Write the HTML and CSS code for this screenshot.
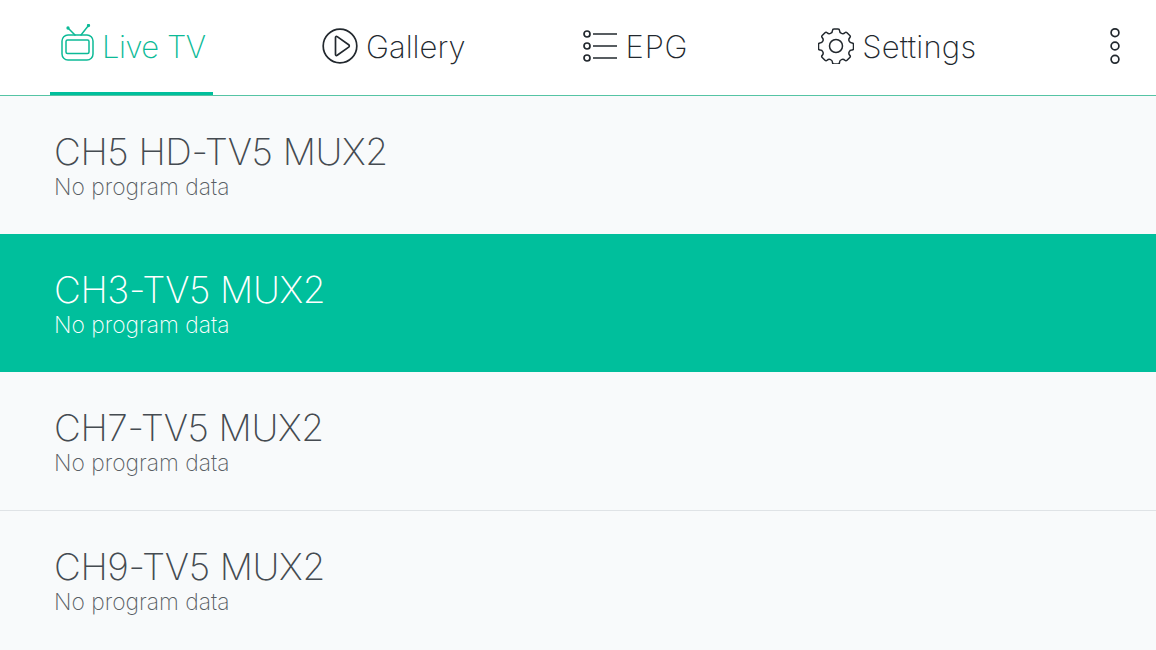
FILE: index.html
```html
<!DOCTYPE html>
<html lang="en">
<head>
<meta charset="utf-8">
<title>Live TV</title>
<link rel="stylesheet" href="styles.css">
</head>
<body>
<header class="topbar">
  <nav class="tabs">
    <a class="tab tab-live active">
      <svg class="icon" width="36" height="38" viewBox="0 0 36 38" fill="none" stroke="currentColor" stroke-width="1.500" stroke-linecap="round" stroke-linejoin="round">
        <rect x="2" y="11" width="31" height="25" rx="6"/>
        <rect x="6" y="16" width="23" height="13.500" rx="1.500"/>
        <path d="M8 4 15 11M28.500 1.500 21 11"/>
        <circle cx="8" cy="4" r=".9" fill="currentColor"/>
        <circle cx="28.500" cy="1.500" r=".9" fill="currentColor"/>
      </svg>
      <span class="label">Live TV</span>
    </a>
    <a class="tab tab-gallery">
      <svg class="icon" width="36" height="36" viewBox="0 0 36 36" fill="none" stroke="currentColor" stroke-width="1.700" stroke-linejoin="round">
        <circle cx="18" cy="18" r="16.800"/>
        <path d="M13.500 9.500c0-1 .9-1.400 1.700-.9l11.500 8.200c.8.600.8 1.700 0 2.300l-11.500 8.200c-.8.500-1.700.1-1.700-.9z"/>
      </svg>
      <span class="label">Gallery</span>
    </a>
    <a class="tab tab-epg">
      <svg class="icon" width="36" height="36" viewBox="0 0 36 36" fill="none" stroke="currentColor" stroke-width="1.700">
        <circle cx="5" cy="6" r="3"/>
        <circle cx="5" cy="18" r="3"/>
        <circle cx="5" cy="30" r="3"/>
        <path d="M11 6h24M11 18h24M11 30h24"/>
      </svg>
      <span class="label">EPG</span>
    </a>
    <a class="tab tab-settings">
      <svg class="icon" width="36" height="36" viewBox="0 0 36 36" fill="none" stroke="currentColor" stroke-width="1.500" stroke-linejoin="round">
        <circle cx="18" cy="18" r="6.500"/>
        <path d="M14.500 2.500c0-1 .7-1.500 1.500-1.500h4c.8 0 1.500.5 1.500 1.500 0 2.800 3.400 4.200 5.400 2.200.7-.7 1.500-.6 2.100 0l2.800 2.800c.6.600.7 1.400 0 2.100-2 2-.6 5.400 2.200 5.400 1 0 1.500.7 1.500 1.500v4c0 .8-.5 1.500-1.500 1.500-2.800 0-4.200 3.400-2.200 5.400.7.700.6 1.500 0 2.100l-2.800 2.800c-.6.600-1.400.7-2.100 0-2-2-5.400-.6-5.400 2.200 0 1-.7 1.500-1.500 1.500h-4c-.8 0-1.500-.5-1.500-1.500 0-2.800-3.400-4.200-5.400-2.200-.7.700-1.500.6-2.100 0l-2.800-2.800c-.6-.6-.7-1.400 0-2.100 2-2 .6-5.400-2.200-5.400-1 0-1.500-.7-1.500-1.500v-4c0-.8.500-1.500 1.500-1.500 2.800 0 4.200-3.400 2.200-5.400-.7-.7-.6-1.500 0-2.100l2.800-2.800c.6-.6 1.400-.7 2.100 0 2 2 5.400.6 5.400-2.200z"/>
      </svg>
      <span class="label">Settings</span>
    </a>
  </nav>
  <button class="more" aria-label="More options">
    <svg width="10" height="38" viewBox="0 0 10 38" fill="none" stroke="currentColor" stroke-width="1.700">
      <circle cx="5" cy="5.700" r="3.900"/>
      <circle cx="5" cy="19" r="3.900"/>
      <circle cx="5" cy="32.300" r="3.900"/>
    </svg>
  </button>
</header>
<main class="channels">
  <div class="channel">
    <div class="name">CH5 HD-TV5 MUX2</div>
    <div class="program">No program data</div>
  </div>
  <div class="channel selected">
    <div class="name">CH3-TV5 MUX2</div>
    <div class="program">No program data</div>
  </div>
  <div class="channel">
    <div class="name">CH7-TV5 MUX2</div>
    <div class="program">No program data</div>
  </div>
  <div class="channel">
    <div class="name">CH9-TV5 MUX2</div>
    <div class="program">No program data</div>
  </div>
</main>
</body>
</html>
```
FILE: styles.css
```css
* { box-sizing: border-box; }
html, body { margin: 0; padding: 0; }
body {
  width: 1156px;
  height: 650px;
  overflow: hidden;
  background: #f8fafb;
  font-family: "Inter", "Liberation Sans", sans-serif;
  font-weight: 250;
}
.topbar {
  height: 96px;
  background: #fff;
  border-bottom: 1px solid #55c4a4;
  display: flex;
  justify-content: space-between;
}
.tabs { display: flex; padding-left: 50px; }
.tab {
  display: flex;
  align-items: center;
  gap: 8px;
  height: 95px;
  padding: 0 8px 0 10px;
  font-size: 31px;
  color: #22282e;
  white-space: nowrap;
}
.icon { flex-shrink: 0; }
.label { margin-top: -3px; }
.tab.active {
  color: #0cba97;
  border-bottom: 3px solid #00bf9c;
  padding-top: 3px;
  width: 163px;
}
.tab-live { gap: 6px; }
.tab-live .label { letter-spacing: -0.5px; }
.tab-gallery { margin-left: 99px; }
.tab-epg { margin-left: 98px; }
.tab-epg .label { letter-spacing: 0.8px; }
.tab-settings { margin-left: 112px; }
.tab-settings .label { letter-spacing: 0.2px; }
.tab-live .icon { margin-top: -9px; }
.tab-gallery .icon, .tab-epg .icon, .tab-settings .icon { margin-top: -4px; }
.more {
  width: 82px;
  height: 95px;
  border: 0;
  background: none;
  padding: 0 0 3px;
  display: flex;
  align-items: center;
  justify-content: center;
  color: #22282e;
}
.channel {
  height: 138px;
  padding: 34px 54px 0;
}
.channel.selected {
  background: #00bf9c;
  color: #fff;
}
.channel:nth-child(3) { border-bottom: 1px solid #dfe3e6; height: 139px; }
.name {
  font-size: 37px;
  letter-spacing: -0.370px;
  line-height: 44px;
  color: #454b51;
}
.program {
  font-size: 22.800px;
  line-height: 26px;
  color: #585e64;
}
.selected .name, .selected .program { color: #fff; }
```
